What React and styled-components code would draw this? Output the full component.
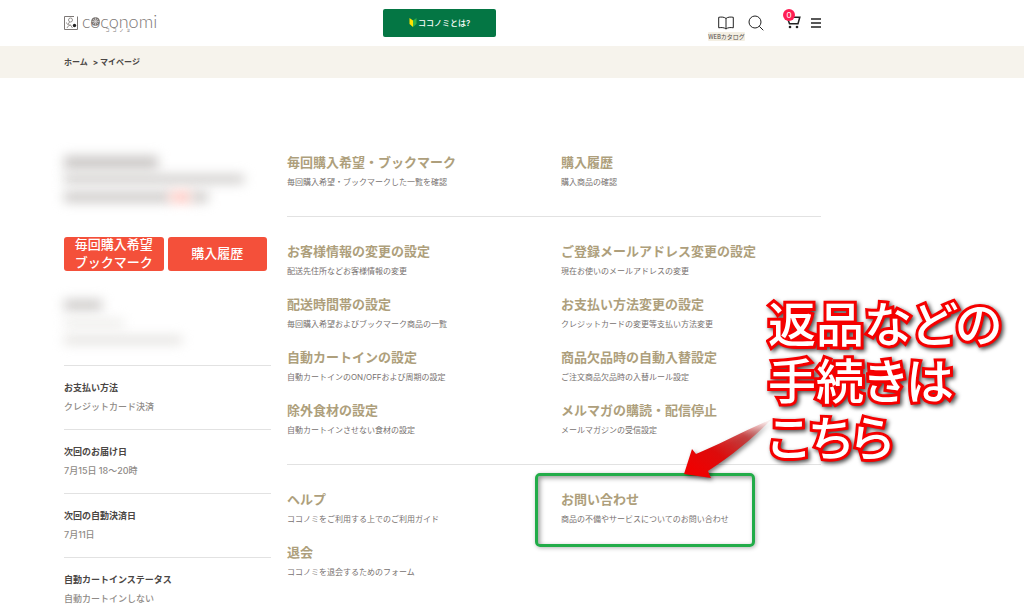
import React from "react"
import styled, { createGlobalStyle } from "styled-components"

const GlobalStyle = createGlobalStyle`
  * {
    box-sizing: border-box;
  }
  body {
    margin: 0;
    background: #fff;
    color: #4a4644;
    font-family: Inter, "Noto Sans CJK JP", sans-serif;
  }
  a {
    color: inherit;
    text-decoration: none;
  }
  h2, p, dl, dt, dd, ol {
    margin: 0;
    padding: 0;
  }
`

const Page = styled.div`
  position: relative;
  height: 100vh;
  overflow: hidden;
`

const Header = styled.header`
  display: grid;
  grid-template-columns: 319px 1fr auto;
  align-items: center;
  height: 46px;
  padding: 0 203px 0 64px;
`

const Logo = styled.a`
  display: flex;
  align-items: flex-start;
  gap: 4px;
  color: #7d7876;

  > svg {
    margin-top: 2px;
  }
`

const LogoName = styled.span`
  position: relative;
  display: flex;
  flex-direction: column;
  align-items: center;
  font-family: Lato, sans-serif;
  font-weight: 300;
  font-size: 18px;
  line-height: 14px;
`

const LogoKana = styled.small`
  font-family: "Noto Sans CJK JP", sans-serif;
  font-weight: 500;
  font-size: 4px;
  line-height: 4px;
  letter-spacing: 3px;
`

const LogoFlower = styled.svg`
  position: absolute;
  left: 9px;
  top: 3px;
`

const AboutButton = styled.button`
  display: flex;
  align-items: center;
  justify-content: center;
  gap: 1px;
  width: 113px;
  height: 28px;
  padding: 0 0 2px;
  border: 0;
  border-radius: 2px;
  background: #047644;
  color: #fff;
  font-family: inherit;
  font-weight: 500;
  font-size: 8px;
`

const Tools = styled.nav`
  display: flex;
  align-items: center;
`

const Tool = styled.button`
  position: relative;
  display: flex;
  padding: 0;
  margin-left: ${(props) => props.$gap || 0}px;
  border: 0;
  background: none;
  color: #222;
`

const CatalogLabel = styled.span`
  position: absolute;
  top: 16px;
  left: -10px;
  width: 37px;
  border-radius: 1px;
  background: #f3eee2;
  color: #4e4a49;
  font-family: "Noto Sans CJK JP", sans-serif;
  font-size: 6px;
  line-height: 9px;
  text-align: center;
  white-space: nowrap;
`

const Badge = styled.span`
  position: absolute;
  top: -7px;
  left: -2px;
  width: 12px;
  height: 12px;
  border-radius: 50%;
  background: #ff1f55;
  color: #fff;
  font-family: "Liberation Sans", sans-serif;
  font-size: 9px;
  line-height: 12px;
  text-align: center;
`

const Breadcrumb = styled.nav`
  background: #f6f3ec;
  padding: 0 64px;

  ol {
    display: flex;
    gap: 5px;
    list-style: none;
    font-weight: 700;
    font-size: 8px;
    line-height: 32px;
  }
`

const Content = styled.div`
  display: grid;
  grid-template-columns: 207px 1fr;
  gap: 16px;
  padding: 74px 203px 0 64px;
`

const Sidebar = styled.aside`
  display: flex;
  flex-direction: column;
`

const Masked = styled.div`
  height: ${(props) => props.$height}px;
  padding-top: ${(props) => props.$top || 0}px;
`

const MaskedLine = styled.div`
  width: ${(props) => props.$width}px;
  height: ${(props) => props.$size || 10}px;
  margin-bottom: ${(props) => props.$after || 9}px;
  background: ${(props) => props.$color || "#c9c6c4"};
  filter: blur(6px);
`

const MaskedRow = styled.div`
  display: flex;
`

const ButtonRow = styled.div`
  display: grid;
  grid-template-columns: 1fr 1fr;
  gap: 4px;
  margin-right: 4px;
`

const RedButton = styled.button`
  display: flex;
  align-items: center;
  justify-content: center;
  height: 34px;
  padding: 0 0 2px;
  border: 0;
  border-radius: 3px;
  background: #f4503a;
  color: #fff;
  font-family: inherit;
  font-weight: 500;
  font-size: 13px;
  line-height: 18px;
`

const Status = styled.div`
  padding: 13px 0 12px;
  border-top: 1px solid #e2e2e2;

  dt {
    font-weight: 700;
    font-size: 9px;
    line-height: 18px;
  }
  dd {
    color: #8f8b87;
    font-weight: 500;
    font-size: 9px;
    line-height: 20px;
  }
`

const Section = styled.section`
  display: grid;
  grid-template-columns: 1fr 1fr;
  gap: 14px;
  padding-bottom: 25px;

  & + & {
    border-top: 1px solid #e2e2e2;
    padding-top: 24px;
  }
`

const MenuLink = styled.a`
  position: relative;
  display: block;
  white-space: nowrap;

  h2 {
    color: #ae9f7c;
    font-weight: 700;
    font-size: 13px;
    line-height: 21px;
  }
  p {
    color: #77716f;
    font-size: 8px;
    line-height: 18px;
  }
`

const Highlight = styled.span`
  position: absolute;
  top: -16px;
  left: -26px;
  width: 220px;
  height: 74px;
  border: 3px solid #22ac49;
  border-radius: 5px;
  box-shadow: inset 2px 2px 5px rgba(0, 0, 0, 0.4), 1px 1px 4px rgba(0, 0, 0, 0.3);
`

const Callout = styled.p`
  position: absolute;
  top: 293px;
  left: 768px;
  color: #fff;
  font-family: "Noto Sans CJK JP", sans-serif;
  font-weight: 500;
  font-size: 48px;
  line-height: 57px;
  font-feature-settings: "palt";
  white-space: nowrap;
  -webkit-text-stroke: 6px #f50000;
  paint-order: stroke fill;
  filter: drop-shadow(2px 2px 2px rgba(0, 0, 0, 0.7));
`

const Arrow = styled.svg`
  position: absolute;
  top: 410px;
  left: 676px;
  filter: drop-shadow(2px 2px 2px rgba(0, 0, 0, 0.5));
`

const statuses = [
  ["お支払い方法", "クレジットカード決済"],
  ["次回のお届け日", "7月15日 18〜20時"],
  ["次回の自動決済日", "7月11日"],
  ["自動カートインステータス", "自動カートインしない"],
]

const sections = [
  [
    ["毎回購入希望・ブックマーク", "毎回購入希望・ブックマークした一覧を確認"],
    ["購入履歴", "購入商品の確認"],
  ],
  [
    ["お客様情報の変更の設定", "配送先住所などお客様情報の変更"],
    ["ご登録メールアドレス変更の設定", "現在お使いのメールアドレスの変更"],
    ["配送時間帯の設定", "毎回購入希望およびブックマーク商品の一覧"],
    ["お支払い方法変更の設定", "クレジットカードの変更等支払い方法変更"],
    ["自動カートインの設定", "自動カートインのON/OFFおよび周期の設定"],
    ["商品欠品時の自動入替設定", "ご注文商品欠品時の入替ルール設定"],
    ["除外食材の設定", "自動カートインさせない食材の設定"],
    ["メルマガの購読・配信停止", "メールマガジンの受信設定"],
  ],
  [
    ["ヘルプ", "ココノミをご利用する上でのご利用ガイド"],
    ["お問い合わせ", "商品の不備やサービスについてのお問い合わせ", true],
    ["退会", "ココノミを退会するためのフォーム"],
  ],
]

function SiteLogo() {
  return (
    <Logo href="#" aria-label="coconomi">
      <svg width="14" height="14" viewBox="0 0 14 14" fill="none" stroke="currentColor">
        <path d="M10 .5H.5v13h13V.5" />
        <circle cx="6.500" cy="4" r="2" strokeWidth=".8" />
        <path d="M5.500 6L4 8.500M2.500 6.500c.5 2 2 3 4 2.500M3 12c1-2 2-2.500 3.500-3l2 3" strokeWidth=".8" />
        <circle cx="10.500" cy="9.500" r="1.700" fill="#222" stroke="none" />
      </svg>
      <LogoName>
        coconomi
        <LogoFlower width="9" height="9" viewBox="0 0 9 9" fill="#8d8785" stroke="#5b5553" strokeWidth=".6">
          <circle cx="4.500" cy="4.500" r="4" />
          <path d="M4.500 .5v8M.5 4.500h8M1.700 1.700l5.600 5.600M7.300 1.700L1.700 7.300" stroke="#ddd" />
        </LogoFlower>
        <LogoKana>ココノミ</LogoKana>
      </LogoName>
    </Logo>
  )
}

function HeaderTools() {
  return (
    <Tools>
      <Tool aria-label="WEBカタログ">
        <svg width="16" height="14" viewBox="0 0 16 14" fill="none" stroke="currentColor">
          <path d="M8 2.500C6.500 1 3.500 .8 .7 1.300v10.500C3.500 11.300 6.500 11.500 8 13c1.500-1.500 4.500-1.700 7.300-1.200V1.300C12.500 .8 9.500 1 8 2.500zV13" />
        </svg>
        <CatalogLabel>WEBカタログ</CatalogLabel>
      </Tool>
      <Tool $gap={14} aria-label="検索">
        <svg width="16" height="16" viewBox="0 0 16 16" fill="none" stroke="currentColor">
          <circle cx="7" cy="7" r="6" />
          <path d="M11.300 11.300l4 4" />
        </svg>
      </Tool>
      <Tool $gap={21} aria-label="カート">
        <svg width="16" height="14" viewBox="0 0 16 14" fill="none" stroke="currentColor" strokeWidth="1.500">
          <path d="M0 .8h2l2.500 7h8.500l1.800-6.500H5" />
          <circle cx="5" cy="11" r="1.300" fill="currentColor" stroke="none" />
          <circle cx="12" cy="11" r="1.300" fill="currentColor" stroke="none" />
        </svg>
        <Badge>0</Badge>
      </Tool>
      <Tool $gap={10} aria-label="メニュー">
        <svg width="10" height="10" viewBox="0 0 10 10" stroke="currentColor" strokeWidth="1.600">
          <path d="M0 1h10M0 5h10M0 9h10" />
        </svg>
      </Tool>
    </Tools>
  )
}

export default function App() {
  return (
    <>
      <GlobalStyle />
      <Page>
        <Header>
          <SiteLogo />
          <AboutButton>
            <svg width="8" height="9" viewBox="0 0 8 9">
              <path d="M.5 0L4 2.500V9L.5 6z" fill="#ffe100" />
              <path d="M7.500 0L4 2.500V9l3.500-3z" fill="#2fb04a" />
            </svg>
            ココノミとは?
          </AboutButton>
          <HeaderTools />
        </Header>
        <Breadcrumb>
          <ol>
            <li>
              <a href="#">ホーム</a>
            </li>
            <li>&gt; マイページ</li>
          </ol>
        </Breadcrumb>
        <Content>
          <Sidebar>
            <Masked $height={85} $top={4}>
              <MaskedLine $width={94} $size={13} $after={6} />
              <MaskedLine $width={180} $size={8} />
              <MaskedRow>
                <MaskedLine $width={106} />
                <MaskedLine $width={22} $color="#ffc4bc" />
                <MaskedLine $width={16} />
              </MaskedRow>
            </Masked>
            <ButtonRow>
              <RedButton>
                <span>
                  毎回購入希望
                  <br />
                  ブックマーク
                </span>
              </RedButton>
              <RedButton>購入履歴</RedButton>
            </ButtonRow>
            <Masked $height={94} $top={29}>
              <MaskedLine $width={38} />
              <MaskedLine $width={60} $size={8} $color="#ecebe8" />
              <MaskedLine $width={118} $size={8} $color="#e2e0dd" />
            </Masked>
            <dl>
              {statuses.map(([label, value]) => (
                <Status key={label}>
                  <dt>{label}</dt>
                  <dd>{value}</dd>
                </Status>
              ))}
            </dl>
          </Sidebar>
          <main>
            {sections.map((items, i) => (
              <Section key={i}>
                {items.map(([title, text, marked]) => (
                  <MenuLink href="#" key={title}>
                    <h2>{title}</h2>
                    <p>{text}</p>
                    {marked && <Highlight />}
                  </MenuLink>
                ))}
              </Section>
            ))}
          </main>
        </Content>
        <Arrow width="100" height="76" viewBox="0 0 100 76">
          <defs>
            <linearGradient id="arrow" x1="0.1" y1="0.9" x2="1" y2="0.1">
              <stop offset="0" stopColor="#f00000" />
              <stop offset="0.35" stopColor="#dc0c0c" />
              <stop offset="0.7" stopColor="#c83232" stopOpacity="0.85" />
              <stop offset="1" stopColor="#e06060" stopOpacity="0.1" />
            </linearGradient>
          </defs>
          <path d="M8 64L16 39l4 5C40 36 64 23 96 9C78 27 58 44 32 61l3 7z" fill="url(#arrow)" />
        </Arrow>
        <Callout>
          返品などの
          <br />
          手続きは
          <br />
          こちら
        </Callout>
      </Page>
    </>
  )
}
